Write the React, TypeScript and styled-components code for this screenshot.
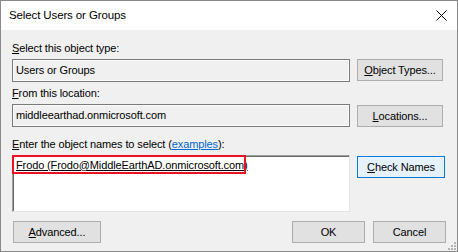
import React from 'react';
import styled, { createGlobalStyle } from 'styled-components';

const Global = createGlobalStyle`
  html, body { margin: 0; padding: 0; background: #ffffff; }
  body {
    font-family: "Liberation Sans", Arial, sans-serif;
    font-size: 11px;
    letter-spacing: -0.12px;
    color: #000000;
  }
  * { box-sizing: border-box; }
`;

const Window = styled.div`
  position: relative;
  width: 458px;
  height: 252px;
  border: 1px solid #8a8a8a;
  background: #f0f0f0;
  display: flex;
  flex-direction: column;
`;

const TitleBar = styled.div`
  height: 29px;
  background: #ffffff;
  display: flex;
  align-items: center;
  justify-content: space-between;
  padding: 0 10px 0 8px;
`;

const Title = styled.span`
  font-size: 11.5px;
  line-height: 15px;
`;

const Content = styled.div`
  display: flex;
  flex-direction: column;
  padding: 0 11px;
`;

const Section = styled.div<{ $top: number }>`
  display: grid;
  grid-template-columns: 338px auto;
  column-gap: 7px;
  row-gap: 3px;
  margin-top: ${(p) => p.$top}px;
  align-items: start;
`;

const Label = styled.div`
  grid-column: 1 / -1;
  height: 15px;
  line-height: 15px;
  white-space: nowrap;
`;

const Link = styled.span`
  color: #0066cc;
  text-decoration: underline;
`;

const ReadOnlyBox = styled.div`
  height: 23px;
  border: 1px solid #7a7a7a;
  box-shadow: inset 0 0 0 1px #fbfbfb;
  padding: 0 3px;
  display: flex;
  align-items: center;
  line-height: 15px;
`;

const NamesBox = styled.div`
  position: relative;
  height: 57px;
  background: #ffffff;
  border-top: 1px solid #a0a0a0;
  border-left: 1px solid #a0a0a0;
  border-right: 1px solid #e3e3e3;
  border-bottom: 1px solid #e3e3e3;
  box-shadow: inset 1px 1px 0 #696969;
  padding: 2px 3px;
  line-height: 15px;
`;

const ResolvedName = styled.span`
  text-decoration: underline;
  white-space: nowrap;
`;

const Highlight = styled.div`
  position: absolute;
  top: -1px;
  left: -1px;
  width: 234px;
  height: 19px;
  border: 2px solid #e81224;
  pointer-events: none;
`;

const Button = styled.button<{ $w: number; $default?: boolean; $mt?: number }>`
  width: ${(p) => p.$w}px;
  height: 22px;
  margin: ${(p) => p.$mt ?? 0}px 0 0 0;
  padding: 0;
  font-family: inherit;
  font-size: 11px;
  letter-spacing: -0.12px;
  color: #000000;
  background: ${(p) => (p.$default ? '#e5f1fb' : '#e1e1e1')};
  border: 1px solid ${(p) => (p.$default ? '#0078d7' : '#adadad')};
  line-height: 15px;
  text-align: center;
  white-space: nowrap;
`;

const Footer = styled.div`
  display: flex;
  align-items: center;
  margin-top: 9px;
  padding-left: 1px;
  gap: 8px;
`;

const Spacer = styled.div`
  flex: 1;
`;

const Grip = styled.svg`
  position: absolute;
  right: 0;
  bottom: 0;
`;

export default function App() {
  return (
    <>
      <Global />
      <Window>
        <TitleBar>
          <Title>Select Users or Groups</Title>
          <svg width="11" height="11" viewBox="0 0 11 11">
            <path d="M0.5 0.5 L10.5 10.5 M10.5 0.5 L0.5 10.5" stroke="#000" strokeWidth="1" />
          </svg>
        </TitleBar>
        <Content>
          <Section $top={11}>
            <Label>
              <u>S</u>elect this object type:
            </Label>
            <ReadOnlyBox>Users or Groups</ReadOnlyBox>
            <Button $w={86}>
              <u>O</u>bject Types...
            </Button>
          </Section>
          <Section $top={4}>
            <Label>
              <u>F</u>rom this location:
            </Label>
            <ReadOnlyBox>middleearthad.onmicrosoft.com</ReadOnlyBox>
            <Button $w={86} $mt={1}>
              <u>L</u>ocations...
            </Button>
          </Section>
          <Section $top={10}>
            <Label>
              <u>E</u>nter the object names to select (<Link>examples</Link>):
            </Label>
            <NamesBox>
              <ResolvedName>Frodo (Frodo@MiddleEarthAD.onmicrosoft.com)</ResolvedName>
              <Highlight />
            </NamesBox>
            <Button $w={88} $default $mt={1}>
              <u>C</u>heck Names
            </Button>
          </Section>
          <Footer>
            <Button $w={88}>
              <u>A</u>dvanced...
            </Button>
            <Spacer />
            <Button $w={73}>OK</Button>
            <Button $w={73}>Cancel</Button>
          </Footer>
        </Content>
        <Grip width="10" height="10" viewBox="0 0 10 10">
          <g fill="#b4b4b4">
            <rect x="7" y="1" width="2" height="2" />
            <rect x="4" y="4" width="2" height="2" />
            <rect x="7" y="4" width="2" height="2" />
            <rect x="1" y="7" width="2" height="2" />
            <rect x="4" y="7" width="2" height="2" />
            <rect x="7" y="7" width="2" height="2" />
          </g>
        </Grip>
      </Window>
    </>
  );
}
